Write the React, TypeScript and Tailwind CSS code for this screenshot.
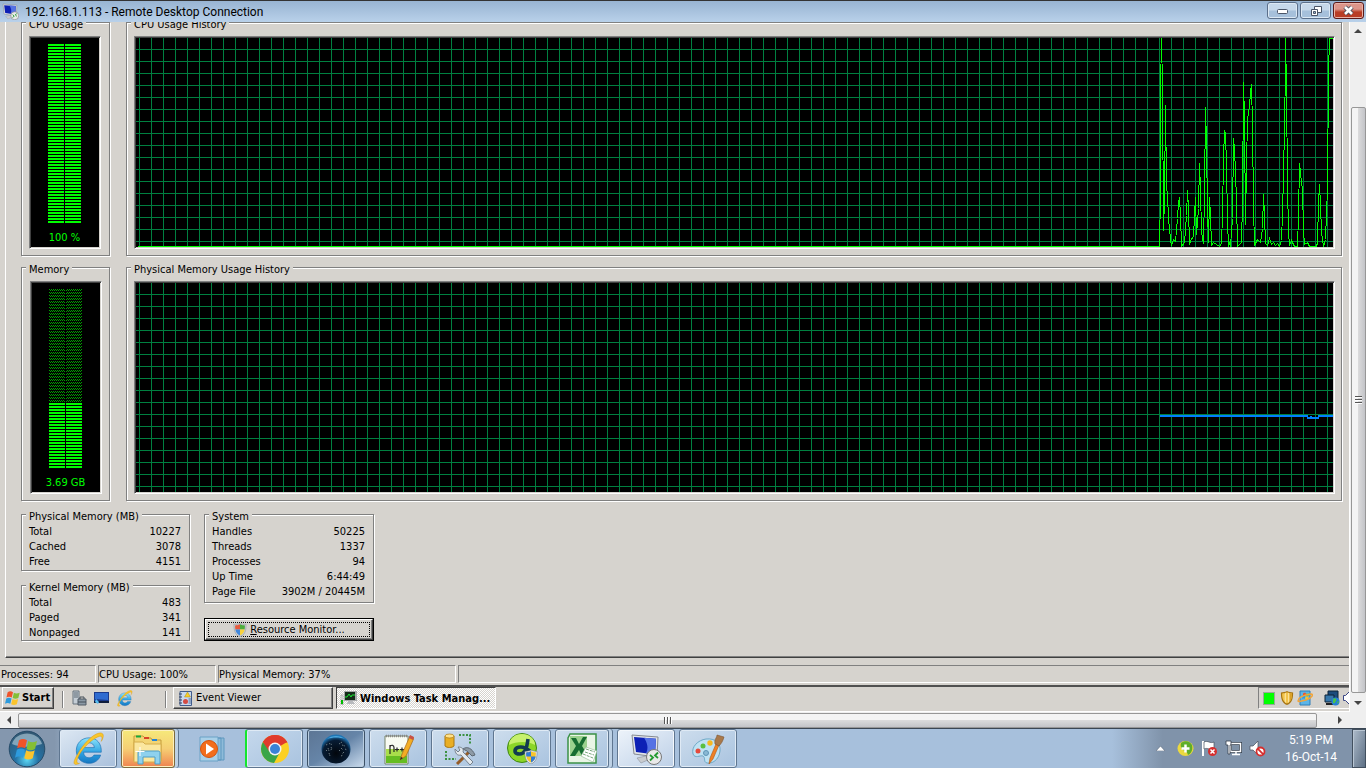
import React, { ReactNode } from 'react';

const cpuTrace =
  '1,208 2,156 2,52 3,0 4,49 5,192 6,161 7,67 8,147 9,157 10,180 12,201 13,207 15,201 17,203 19,180 20,164 21,159 22,177 23,208 26,204 28,177 29,152 30,170 31,206 33,200 35,199 36,177 37,159 38,196 40,170 41,125 42,152 43,193 45,205 46,155 47,69 48,104 49,172 50,204 51,159 52,177 53,207 55,204 58,206 61,208 63,205 64,176 65,120 66,92 67,95 68,127 69,182 70,208 71,205 72,207 74,180 75,100 76,110 77,135 78,162 79,208 83,204 84,164 85,44 86,80 87,186 88,127 89,81 91,67 92,54 93,46 94,87 95,168 96,207 99,201 102,204 104,190 105,156 106,177 107,205 109,207 111,200 113,206 115,204 117,207 119,205 121,208 123,202 124,175 125,137 126,88 127,30 127,0 128,49 129,146 130,194 131,207 133,202 136,208 139,208 140,177 141,125 143,144 144,150 145,192 146,206 149,204 151,208 158,208 159,204 160,165 161,146 162,167 163,194 165,208 167,201 168,175 169,150 170,34 171,0 176,0';

const memoryTrace = '2,133 149,133 150,135 152,135 153,134 154,135 160,135 161,133 176,133';

function Group({ title, className, children }: { title: string; className: string; children: ReactNode }) {
  return (
    <section
      className={`flex flex-col border border-[#808080] shadow-[1px_1px_0_#fff,inset_1px_1px_0_#fff] ${className}`}
    >
      <h2 className="-mt-[5px] ml-1 h-3.5 w-fit bg-[#d6d3ce] px-[3px] leading-[14px] whitespace-nowrap">{title}</h2>
      {children}
    </section>
  );
}

const sunken =
  'border border-t-[#808080] border-l-[#808080] border-r-white border-b-white shadow-[inset_1px_1px_0_#404040,inset_-1px_-1px_0_#d6d3ce] bg-black bg-clip-padding';

function Meter({ id, lit, label, className }: { id: string; lit: number; label: string; className: string }) {
  const split = (60 - lit) * 3;
  return (
    <div className={`mt-1 flex h-[213px] w-[72px] flex-col items-center pt-[7px] pr-px text-[#00ff00] ${sunken} ${className}`}>
      <svg width="33" height="180" shapeRendering="crispEdges" aria-hidden="true">
        <defs>
          <pattern id={`${id}-on`} width="17" height="3" patternUnits="userSpaceOnUse">
            <rect width="16" height="2" fill="#00ff00" />
          </pattern>
          <pattern id={`${id}-off`} width="2" height="3" patternUnits="userSpaceOnUse">
            <rect width="1" height="1" fill="#00a000" />
            <rect x="1" y="1" width="1" height="1" fill="#00a000" />
          </pattern>
        </defs>
        <rect width="16" height={split} fill={`url(#${id}-off)`} />
        <rect x="17" width="16" height={split} fill={`url(#${id}-off)`} />
        <rect y={split} width="33" height={180 - split} fill={`url(#${id}-on)`} />
      </svg>
      <span className="mt-[7px] leading-[14px]">{label}</span>
    </div>
  );
}

function History({ trace, color, width, baseline, label }: { trace: string; color: string; width: number; baseline: boolean; label: string }) {
  return (
    <div className={`mt-1 mr-1.5 ml-[7px] flex h-[213px] p-px ${sunken}`}>
      <div className="flex min-w-0 flex-1 items-end justify-end bg-[linear-gradient(to_right,#008040_1px,transparent_1px),linear-gradient(#008040_1px,transparent_1px)] bg-size-[12px_12px] bg-position-[right_-6px_top_11px]">
        <div className={`ml-0.5 h-px flex-1 ${baseline ? 'bg-[#00ff00]' : ''}`} />
        <svg width="175" height="209" viewBox="0 0 175 209" className="shrink-0" role="img" aria-label={label} shapeRendering="crispEdges">
          <polyline points={trace} fill="none" stroke={color} strokeWidth={width} transform={width === 1 ? 'translate(.5 .5)' : undefined} />
          {baseline && <rect y="208" width="2" height="1" fill={color} />}
        </svg>
      </div>
    </div>
  );
}

function Figures({ rows }: { rows: [string, string][] }) {
  return (
    <dl className="pr-2 pl-[7px] leading-[15px]">
      {rows.map(([k, v]) => (
        <div key={k} className="flex justify-between">
          <dt>{k}</dt>
          <dd>{v}</dd>
        </div>
      ))}
    </dl>
  );
}

const IE = ({ size }: { size: number }) => (
  <svg width={size} height={size} viewBox="0 0 32 32" aria-hidden="true">
    <defs>
      <linearGradient id="ie" x2="0" y2="1">
        <stop stopColor="#8be3fb" />
        <stop offset=".6" stopColor="#2ca0e0" />
        <stop offset="1" stopColor="#1677c2" />
      </linearGradient>
    </defs>
    <path d="M28.5 19H11.8c.3 3.5 2.4 5.3 5.2 5.3 2.200 0 3.800-1 4.600-2.600h6.300C26.400 26.500 22.300 29.500 17 29.500 9.800 29.500 5 24.500 5 17.500S10 5.500 17 5.500c7.300 0 12 5.500 11.500 13.500zM12 14.700h10c-.4-2.900-2.100-4.500-4.900-4.500-2.700 0-4.500 1.600-5.100 4.500z" fill="url(#ie)" stroke="#1c6db0" strokeWidth=".6" />
    <path d="M6.500 20.500C1 29 2 32.500 8 29.500 5 30 4.500 27 8 21 12 14 21 5.500 27 4c2.500-.5 2.600 2 1.500 4.800C31.500 4 31 .2 26.500 1 20 2.200 11 12 6.500 20.500z" fill="#f9c62c" stroke="#d99a12" strokeWidth=".5" />
  </svg>
);

const Flag = ({ size }: { size: number }) => (
  <svg width={size} height={size} viewBox="1 1 18 17" aria-hidden="true">
    <path d="M4 3c2-1.300 4-1.300 6 0L8.600 9c-2-1.200-4-1.200-6 0z" fill="#f0532a" />
    <path d="M11 3.500c2 1.200 4 1.200 6.500 0L16 9.500c-2.200 1.200-4.200 1.200-6.400 0z" fill="#84bf35" />
    <path d="M2.400 10c2-1.200 4-1.200 6 0L7 16c-2-1.200-4-1.200-6 0z" fill="#2e9bdd" />
    <path d="M9.400 10.500c2.200 1.200 4.200 1.200 6.400 0L14.300 16.500c-2.200 1.200-4.300 1.200-6.400 0z" fill="#fbc42d" />
  </svg>
);

const Remote = ({ size }: { size: number }) => (
  <svg width={size} height={size} viewBox="0 0 32 32" aria-hidden="true">
    <path d="M7 25l9-2 4 3-9 4z" fill="#c9ccd0" stroke="#8b9098" strokeWidth=".6" />
    <path d="M2 2l26 2-1 20L4 21z" fill="#e3e5e8" stroke="#858a92" />
    <path d="M4 4l22 1.800-1 15.700L6 19z" fill="#0d20b5" />
    <path d="M14 4.800l12 1-1 15.700-9-1.200c3-5 1-11-2-15.500z" fill="#5572e4" />
    <circle cx="24" cy="24" r="7.500" fill="#e9e9e9" stroke="#777" />
    <path d="M20 22l3 2.500-3 3M28 19.500l-3 3 3 2.500" fill="none" stroke="#259b31" strokeWidth="1.800" />
  </svg>
);

const Shield = ({ size, gold }: { size: number; gold?: boolean }) => (
  <svg width={size} height={size} viewBox="0 0 16 16" aria-hidden="true">
    <clipPath id={gold ? 'sg' : 'sc'}>
      <path d="M8 1.500c2 1 4 1.300 5.600 1.300 0 6-1 9-5.600 11.500C3.400 11.800 2.400 8.500 2.400 2.800 4.200 2.800 6 2.500 8 1.500z" />
    </clipPath>
    <path d="M8 0c2.200 1.200 4.500 1.600 7 1.600C15 8.500 14 13.500 8 16 2 13.500 1 8.500 1 1.600 3.500 1.600 5.800 1.200 8 0z" fill={gold ? '#a87510' : '#c3c8ce'} stroke={gold ? 'none' : '#8b9096'} strokeWidth=".5" />
    {gold ? (
      <g clipPath="url(#sg)">
        <path d="M0 0h16v16H0z" fill="#f2c34b" />
        <path d="M6 0v16M10 0v16" stroke="#fff2c0" />
        <path d="M11 0h5v16h-5z" fill="#d99f27" />
      </g>
    ) : (
      <g clipPath="url(#sc)">
        <path d="M0 0h8v7.500H0z" fill="#e85a3c" />
        <path d="M8 0h8v7.500H8z" fill="#4fae3c" />
        <path d="M0 7.500h8V16H0z" fill="#3f86dc" />
        <path d="M8 7.500h8V16H8z" fill="#f9d23c" />
      </g>
    )}
  </svg>
);

const UacShield = ({ size }: { size: number }) => (
  <svg width={size} height={size} viewBox="0 0 16 16" aria-hidden="true">
    <clipPath id="uac">
      <path d="M8 1.500c2 1 4 1.300 5.600 1.300 0 6-1 9-5.600 11.500C3.400 11.800 2.400 8.500 2.400 2.800 4.200 2.800 6 2.500 8 1.500z" />
    </clipPath>
    <path d="M8 0c2.200 1.200 4.500 1.600 7 1.600C15 8.500 14 13.500 8 16 2 13.500 1 8.500 1 1.600 3.500 1.600 5.800 1.200 8 0z" fill="#e4eaf0" stroke="#6b7680" strokeWidth=".6" />
    <g clipPath="url(#uac)">
      <path d="M0 0h16v16H0z" fill="#f9c52c" />
      <path d="M0 0h8v7.500H0zM8 7.500h8V16H8z" fill="#2f7bd6" />
    </g>
  </svg>
);

const Explorer = () => (
  <svg width="32" height="32" viewBox="0 0 32 32" aria-hidden="true">
    <path d="M2 3h9l2 2h6l1 2h9v21H2z" fill="#f3d574" stroke="#c39b3a" />
    <path d="M4 2.500h5v2H4z" fill="#18a83b" />
    <path d="M12 4h5v2h-5z" fill="#d84527" />
    <path d="M20 6h5v2h-5z" fill="#2685d4" />
    <path d="M2 9h9l2 2h16v18H2z" fill="#fbe79f" stroke="#d6ae4c" />
    <path d="M6 31V20c0-1.500 1-2 2-2h18c1.500 0 2 .7 2 2v11h-5v-7H11v7z" fill="#8ed1ee" stroke="#4f9dc4" />
    <path d="M8 14v9M3.500 18.500h9" stroke="#fff" strokeWidth="1" />
  </svg>
);

const Media = () => (
  <svg width="28" height="28" viewBox="0 0 28 28" aria-hidden="true">
    <path d="M20 3h6v22h-6M18 3h5v22h-5" fill="#8ebbd9" stroke="#5f98bf" />
    <path d="M2 2h18v24H2z" fill="#a9d0e8" stroke="#6aa2c6" />
    <circle cx="11" cy="14" r="8.500" fill="#f26d1c" stroke="#d4530c" />
    <path d="M8 8.500l8 5.500-8 5.500z" fill="#fff" />
  </svg>
);

const Chrome = () => (
  <svg width="30" height="30" viewBox="0 0 30 30" aria-hidden="true">
    <circle cx="15" cy="15" r="14" fill="#fbd024" />
    <path d="M15 15L2.900 8A14 14 0 0 1 27.100 8z" fill="#e03a2c" />
    <path d="M2.900 8A14 14 0 0 0 14 29l6-11-9-1z" fill="#3aa548" />
    <path d="M15 8.500h12.500A14 14 0 0 0 2.900 8L9 17z" fill="#e03a2c" />
    <circle cx="15" cy="15" r="6.500" fill="#f3f3f3" />
    <circle cx="15" cy="15" r="5" fill="#3a82d6" />
  </svg>
);

const Earth = () => (
  <svg width="30" height="30" viewBox="0 0 30 30" aria-hidden="true">
    <defs>
      <radialGradient id="earth" cx=".5" cy=".65" r=".6">
        <stop stopColor="#02060c" />
        <stop offset=".75" stopColor="#071c34" />
        <stop offset="1" stopColor="#1f75b4" />
      </radialGradient>
    </defs>
    <circle cx="15" cy="15" r="14.500" fill="url(#earth)" />
    <path d="M5 11l2-1M8 9.500l3 1M10 13l1 2-2 1M7 14l1 3M8 19l1 3M5 16l1 1M18 10l3-2M21 11l3 1M20 14l2 2M24 15l2 1M23 18l-2 2M18 16l1 1M20 22l2-1" fill="none" stroke="#6a7a80" strokeDasharray="1.500 .8" />
    <path d="M6 5c5-4 13-4 18 0-5-2-13-2-18 0z" fill="#4ca8df" />
  </svg>
);

const Notepad = () => (
  <svg width="32" height="32" viewBox="0 0 32 32" aria-hidden="true">
    <path d="M3 3h23v28H3z" fill="#f8fbf2" stroke="#758269" />
    <path d="M4 16h21v14H4z" fill="#a9de4b" />
    <path d="M4 23h21v7H4z" fill="#66bd22" />
    <path d="M4 3h22" stroke="#888" strokeWidth="2.500" strokeDasharray="1 1" />
    <path d="M8 21v-9M8 13.500c1.500-2 4-1.500 4 1V19M13 16.500h4M15 14.500v4M18 16.500h4M20 14.500v4" fill="none" stroke="#252525" strokeWidth="1.200" />
    <path d="M18 27l2-6 8-18 4 2-8 18z" fill="#f2ad24" stroke="#a86515" strokeWidth=".7" />
    <path d="M28 2l4 2-1 3-4-2z" fill="#c95146" />
    <path d="M18 27l1-3 2 1z" fill="#222" />
  </svg>
);

const Tools = () => (
  <svg width="34" height="34" viewBox="0 0 34 34" aria-hidden="true">
    <path d="M2 4v10c2 2 7 2 9 0V4z" fill="#e9ae24" stroke="#a87712" />
    <ellipse cx="6.500" cy="4" rx="4.500" ry="2" fill="#ffe28a" stroke="#a87712" strokeWidth=".7" />
    <path d="M16 3h11v10M3 19v8h10" fill="none" stroke="#3b9140" strokeWidth="2" strokeDasharray="2 1.500" />
    <path d="M14 32l12-12" stroke="#955c28" strokeWidth="3" />
    <path d="M20 17c4-3 9-1 12 6l-3 1-5-5z" fill="#8d9aa6" stroke="#5c6771" />
    <path d="M12 17l3 3 2-2-2-3c4 0 6 2 5 5l10 10-3 3-9-10c-4 1-6-2-6-6z" fill="#e4eaef" stroke="#75808b" />
  </svg>
);

const Dream = () => (
  <svg width="32" height="32" viewBox="0 0 32 32" aria-hidden="true">
    <circle cx="16" cy="15" r="14.500" fill="#8cd628" stroke="#3f8711" />
    <path d="M3 12a13 11 0 0 1 26 0c-6-4-19-4-26 0z" fill="#c7f06d" />
    <path d="M22 6c-1 6-1 11-5 14-3 2-8 1-8-2 0-4 6-5 10-3 3 1 4 3 6 4" fill="none" stroke="#123b50" strokeWidth="3.600" />
    <g transform="translate(18 17)"><UacShield size={14} /></g>
  </svg>
);

const Excel = () => (
  <svg width="32" height="32" viewBox="0 0 32 32" aria-hidden="true">
    <path d="M4 1h26v29H2V5z" fill="#e9f5e6" stroke="#3b9147" strokeWidth="1.500" />
    <path d="M4 3h17v20H4z" fill="#9bd28e" />
    <path d="M5 5h5l3 6 4-7h4l-5 9 6 10h-6l-3-6-4 6H4l6-10z" fill="#176d31" />
    <path d="M20 14l11 4-4 11-12-6z" fill="#fff" stroke="#8eb890" strokeWidth=".6" />
    <path d="M20 16l9 3M19 19l9 3M17 21l10 4" stroke="#79a77c" strokeDasharray="3 1" />
  </svg>
);

const Paint = () => (
  <svg width="34" height="32" viewBox="0 0 34 32" aria-hidden="true">
    <path d="M15 6c9-1 15 4 14 12-1 9-8 13-13 12-4-1-1-5-4-7-3-1-8 3-10-2C0 14 7 7 15 6z" fill="#bfe2f3" stroke="#6fa9c7" />
    <circle cx="7" cy="18" r="2.500" fill="#e54a3c" />
    <circle cx="12" cy="13" r="2.500" fill="#5abf3f" />
    <circle cx="19" cy="10" r="2.700" fill="#f6b823" />
    <circle cx="15" cy="20" r="2.500" fill="#8ab9d5" stroke="#5e94b5" />
    <path d="M18 31l1-6 6-14 3 1-6 14z" fill="#ee8126" stroke="#b45913" strokeWidth=".6" />
    <path d="M24 11c-1-5 2-6 2-9l7 2c-1 4-3 7-5 9z" fill="#a9794a" stroke="#7e5630" strokeWidth=".6" />
  </svg>
);

const Tasks = () => (
  <svg width="17" height="14" viewBox="0 0 17 14" aria-hidden="true">
    <path d="M1 4h2v10H1z" fill="#e5e5e5" stroke="#888" strokeWidth=".5" />
    <path d="M1 9h2v4H1z" fill="#0b0" />
    <path d="M4 0h13v10H4z" fill="#a7a9ab" />
    <path d="M5 1h10v8H5z" fill="#142b18" />
    <path d="M5 6h2l2-3 2 3 1-2h3" fill="none" stroke="#1be334" />
    <path d="M8 10h5l2 3H7z" fill="#b8babd" />
  </svg>
);

const Orb = () => (
  <svg width="38" height="38" viewBox="0 0 38 38" aria-hidden="true">
    <defs>
      <radialGradient id="orb" cy=".8" r=".8">
        <stop stopColor="#5cd8f5" />
        <stop offset=".4" stopColor="#2471a4" />
        <stop offset="1" stopColor="#32566f" />
      </radialGradient>
    </defs>
    <circle cx="19" cy="19" r="17.800" fill="url(#orb)" stroke="#254b69" />
    <path d="M4 14C8 0 30 0 34 14c-9 3-21 4-30 0z" fill="#c9dce6" opacity=".55" />
    <g transform="translate(7 7)"><Flag size={24} /></g>
  </svg>
);

const ServerIcon = () => (
  <svg width="15" height="16" viewBox="0 0 15 16" aria-hidden="true">
    <path d="M1 1h6v13H1z" fill="#c4cdd5" stroke="#66727c" />
    <path d="M2 3h4M2 5h4M2 7h4" stroke="#5a6771" />
    <path d="M6 9h8v6H6z" fill="#8b99a5" stroke="#505b64" />
    <path d="M8 9V7h4v2M6 12h8" fill="none" stroke="#444f58" />
  </svg>
);

const DesktopIcon = () => (
  <svg width="15" height="14" viewBox="0 0 15 14" aria-hidden="true">
    <path d="M0 1h15v11H0z" fill="#1b3a8c" />
    <path d="M1 2h13v7L1 8z" fill="#2f6bd0" />
    <path d="M0 10h15v2H0z" fill="#101d3c" />
    <path d="M2 8l3 3-1 2-3-2z" fill="#58bdf2" />
  </svg>
);

const EventIcon = () => (
  <svg width="13" height="15" viewBox="0 0 13 15" aria-hidden="true">
    <path d="M1 .5h11.500v14H1z" fill="#c7d8ee" stroke="#405b8b" />
    <path d="M0 3h3M0 6h3M0 9h3M0 12h3" stroke="#33415e" />
    <path d="M8.500 1l3 5h-6z" fill="#f8cf27" stroke="#a98714" strokeWidth=".5" />
    <circle cx="6.500" cy="10.500" r="2.500" fill="#d34b44" />
    <path d="M9.500 8h2.500M9.500 10h2.500M9.500 12h2.500" stroke="#536f9e" />
  </svg>
);

const UpdateIcon = () => (
  <svg width="16" height="16" viewBox="0 0 16 16" aria-hidden="true">
    <path d="M3 1h10v14H3z" fill="#5cb5e8" stroke="#2f7eb8" />
    <g transform="translate(5 2)"><Flag size={8} /></g>
    <path d="M1 11C1 7 7 5 14 4c3 0 1 4-5 6-4 1-8 2-8 1z" fill="none" stroke="#f1a53b" strokeWidth="1.500" />
  </svg>
);

const NetGlobe = () => (
  <svg width="16" height="16" viewBox="0 0 16 16" aria-hidden="true">
    <path d="M4 1h10v8H4z" fill="#1c4c7c" stroke="#0c2237" />
    <path d="M1 5h9v7H1z" fill="#3677ab" stroke="#0c2237" />
    <path d="M2 14h7" stroke="#222" strokeWidth="2" />
    <circle cx="11.500" cy="11.500" r="4" fill="#2680d5" />
    <path d="M9 9c3-2 4 1 3 2s-1 3-3 2zM13 12l2-1-1 3z" fill="#4ac449" />
  </svg>
);

const raised =
  'border border-t-white border-l-white border-r-[#404040] border-b-[#404040] shadow-[inset_-1px_-1px_0_#808080]';

const apps: [string, ReactNode, string][] = [
  ['Internet Explorer', <IE size={34} />, 'w-[58px] border-[#5f7690] bg-linear-to-br from-[#dde8f3] to-[#a9c0dc] shadow-[inset_0_0_0_1px_#dfeaf5]'],
  ['Windows Explorer', <Explorer />, 'mr-1 w-[54px] border-[#7d6b3d] bg-linear-to-b from-[#f6e97a] via-[#f5cf74] to-[#ee8350] shadow-[inset_0_0_0_1px_#fdf0be,3px_0_0_#bdd1e5,4px_0_0_#5f7690]'],
  ['Windows Media Player', <Media />, 'w-[58px] border-transparent'],
  ['Google Chrome', <Chrome />, 'w-[58px] border-[#5f7690] border-l-[#14e62e] border-l-2 bg-linear-to-br from-[#c5d8ec] to-[#a9c3df] shadow-[inset_0_0_0_1px_#dfeaf5]'],
  ['Earth', <Earth />, 'w-[58px] border-[#3d5268] bg-linear-to-br from-[#5c7594] via-[#6685a8] to-[#cbdcee] shadow-[inset_0_0_0_1px_#b9cde0]'],
  ['Notepad++', <Notepad />, 'w-[58px] border-[#5f7690] bg-linear-to-br from-[#cddded] to-[#a9c3df] shadow-[inset_0_0_0_1px_#dfeaf5]'],
  ['Database Tools', <Tools />, 'w-[58px] border-[#5f7690] bg-linear-to-br from-[#cddded] to-[#a9c3df] shadow-[inset_0_0_0_1px_#dfeaf5]'],
  ['Dreamweaver', <Dream />, 'w-[58px] border-[#5f7690] bg-linear-to-br from-[#cddded] to-[#a9c3df] shadow-[inset_0_0_0_1px_#dfeaf5]'],
  ['Excel', <Excel />, 'mr-1 w-[54px] border-[#5f7690] bg-linear-to-br from-[#cddded] to-[#a9c3df] shadow-[inset_0_0_0_1px_#dfeaf5,3px_0_0_#bdd1e5,4px_0_0_#5f7690]'],
  ['Remote Desktop Connection', <Remote size={32} />, 'w-[58px] border-[#5f7690] bg-linear-to-br from-[#edf3fa] to-[#bdd0e7] shadow-[inset_0_0_0_1px_#f4f8fc]'],
  ['Paint', <Paint />, 'w-[58px] border-[#5f7690] bg-linear-to-br from-[#cddded] to-[#a9c3df] shadow-[inset_0_0_0_1px_#dfeaf5]'],
];

const winButton =
  'flex h-[17px] w-[31px] items-center justify-center rounded-[3px] border border-[#5b6f8a] bg-linear-to-b from-[#c6d8ea] from-45% to-[#a6c0db] to-55% shadow-[inset_0_0_0_1px_#dce8f4]';

export default function App() {
  return (
    <div className="flex h-screen flex-col overflow-hidden bg-[#d6d3ce] font-['Tahoma','DejaVu_Sans_Condensed','DejaVu_Sans',sans-serif] text-[11px] text-black">
      <header className="flex h-[22px] shrink-0 items-center border-t border-[#333] bg-linear-to-b from-[#98b4d2] to-[#b9d1ea] pr-0.5 pl-0.5 font-['Segoe_UI',Roboto,'Noto_Sans',sans-serif] text-xs">
        <Remote size={17} />
        <h1 className="ml-1.5 flex-1 leading-5">192.168.1.113 - Remote Desktop Connection</h1>
        <div className="flex gap-0.5 self-start pt-px">
          <button aria-label="Minimize" className={winButton}>
            <svg width="12" height="6"><rect x=".5" y="1.500" width="10" height="4" rx="1" fill="#fff" stroke="#4a5568" /></svg>
          </button>
          <button aria-label="Restore" className={winButton}>
            <svg width="12" height="12"><path d="M4.500 1.500h7v6h-7z" fill="#fff" stroke="#4a5568" /><path d="M1.500 4.500h6v6h-6z" fill="#fff" stroke="#4a5568" /><path d="M3.500 6.500h2v2h-2z" fill="#9bb7d4" stroke="#4a5568" /></svg>
          </button>
          <button aria-label="Close" className="flex h-[17px] w-[31px] items-center justify-center rounded-[3px] border border-[#5c1a1a] bg-linear-to-b from-[#dc958a] from-40% to-[#b93d26] to-60% shadow-[inset_0_0_0_1px_#e9b3a8]">
            <svg width="13" height="11"><path d="M3 2l7 7M10 2L3 9" stroke="#4a4f5c" strokeWidth="4.500" /><path d="M3 2l7 7M10 2L3 9" stroke="#fff" strokeWidth="2.600" /></svg>
          </button>
        </div>
      </header>

      <div className="flex min-h-0 flex-1">
        <main className="flex min-w-0 flex-1 flex-col overflow-hidden">
          <div className="ml-[5px] flex flex-1 flex-col border-b border-l border-b-[#404040] border-l-white pr-[7px] pb-[15px] pl-[15px] shadow-[inset_0_-1px_0_#808080]">
            <div className="flex gap-4">
              <Group title="CPU Usage" className="h-[234px] w-[89px]">
                <Meter id="cpu" lit={60} label="100 %" className="ml-[7px]" />
              </Group>
              <Group title="CPU Usage History" className="h-[234px] flex-1">
                <History trace={cpuTrace} color="#00ff00" width={1} baseline label="CPU usage history" />
              </Group>
            </div>
            <div className="mt-[11px] flex gap-4">
              <Group title="Memory" className="h-[234px] w-[89px]">
                <Meter id="mem" lit={22} label="3.69 GB" className="ml-2" />
              </Group>
              <Group title="Physical Memory Usage History" className="h-[234px] flex-1">
                <History trace={memoryTrace} color="#0080ff" width={2} baseline={false} label="Physical memory usage history" />
              </Group>
            </div>
            <div className="mt-[13px] flex gap-3.5">
              <div className="flex w-[169px] flex-col gap-3.5">
                <Group title="Physical Memory (MB)" className="h-[57px]">
                  <Figures rows={[['Total', '10227'], ['Cached', '3078'], ['Free', '4151']]} />
                </Group>
                <Group title="Kernel Memory (MB)" className="h-14">
                  <Figures rows={[['Total', '483'], ['Paged', '341'], ['Nonpaged', '141']]} />
                </Group>
              </div>
              <div className="flex w-[170px] flex-col justify-between">
                <Group title="System" className="h-[89px]">
                  <Figures rows={[['Handles', '50225'], ['Threads', '1337'], ['Processes', '94'], ['Up Time', '6:44:49'], ['Page File', '3902M / 20445M']]} />
                </Group>
                <button className="border border-black">
                  <span className={`flex h-[21px] p-0.5 ${raised}`}>
                    <span className="flex flex-1 items-center justify-center gap-[3px] border border-dotted border-black">
                      <Shield size={14} />
                      <span className="pt-px"><u>R</u>esource Monitor...</span>
                    </span>
                  </span>
                </button>
              </div>
            </div>
          </div>

          <footer className="mt-[7px] flex h-[18px] shrink-0 gap-0.5 leading-[17px] whitespace-nowrap *:border *:border-t-[#808080] *:border-r-white *:border-b-white *:border-l-[#808080]">
            <p className="w-24 border-l-0! pl-px">Processes: 94</p>
            <p className="w-[118px]">CPU Usage: 100%</p>
            <p className="w-[238px]">Physical Memory: 37%</p>
            <p className="flex-1 border-r-0!" />
          </footer>

          <nav aria-label="Remote taskbar" className="mt-0.5 flex h-[27px] shrink-0 items-start border-t-2 border-b border-t-[#505050] border-b-white pl-0.5">
            <button className={`flex h-[22px] w-[52px] items-center gap-px pl-0.5 font-bold ${raised}`}>
              <Flag size={16} />
              <span className="pt-px">Start</span>
            </button>
            <span className="mt-1 ml-2 h-[17px] w-0.5 border-l border-[#808080] bg-white" />
            <button aria-label="Server Manager" className="mt-[3px] ml-2"><ServerIcon /></button>
            <button aria-label="Show desktop" className="mt-1 ml-[7px]"><DesktopIcon /></button>
            <button aria-label="Internet Explorer" className="mt-[3px] ml-[7px]"><IE size={17} /></button>
            <span className="mt-1 mr-1.5 ml-8 h-[17px] w-0.5 border-l border-[#808080] bg-white" />
            <button className={`flex h-[22px] w-40 items-center gap-1 pl-[5px] ${raised}`}>
              <EventIcon />
              <span className="pt-px">Event Viewer</span>
            </button>
            <button className="ml-[3px] flex h-[22px] w-40 items-center gap-[3px] border border-t-[#404040] border-r-white border-b-white border-l-[#404040] bg-[conic-gradient(#fff_25%,#d6d3ce_0_50%,#fff_0_75%,#d6d3ce_0)] bg-size-[2px_2px] pl-[3px] font-bold whitespace-nowrap">
              <Tasks />
              <span className="pt-0.5">Windows Task Manag...</span>
            </button>
            <div className="ml-auto flex h-[22px] w-[91px] items-center overflow-hidden border-t border-b border-l border-t-[#808080] border-b-white border-l-[#808080] pl-1">
              <span className="h-[13px] w-3 shrink-0 border border-[#9aa89a] bg-[#00ff00]" />
              <span className="ml-[5px] shrink-0"><Shield size={14} gold /></span>
              <span className="ml-[3px] shrink-0"><UpdateIcon /></span>
              <span className="ml-[11px] shrink-0"><NetGlobe /></span>
              <svg width="12" height="14" className="ml-0.5 shrink-0" aria-hidden="true"><path d="M1.500 4.500h2l4-4v13l-4-4h-2z" fill="#fff" stroke="#3b4684" /></svg>
            </div>
          </nav>
        </main>

        <div className="flex w-[17px] flex-col items-center border-l border-white bg-[#efefef]">
          <button aria-label="Scroll up" className="flex h-[85px] w-full items-start justify-center pt-[7px]">
            <svg width="8" height="4"><path d="M0 4l4-4 4 4z" fill="#444" /></svg>
          </button>
          <div className="flex w-[15px] flex-1 flex-col items-center justify-center gap-px rounded-[2px] border border-[#979797] bg-linear-to-r from-[#f4f4f4] from-45% via-[#dadadb] via-50% to-[#c3c4c8]">
            <span className="h-0.5 w-[7px] border-b border-white bg-[#555]" />
            <span className="h-0.5 w-[7px] border-b border-white bg-[#555]" />
            <span className="h-0.5 w-[7px] border-b border-white bg-[#555]" />
          </div>
          <button aria-label="Scroll down" className="flex h-[19px] w-full items-center justify-center">
            <svg width="8" height="4"><path d="M0 0l4 4 4-4z" fill="#444" /></svg>
          </button>
        </div>
      </div>

      <div className="flex h-4 shrink-0 items-center bg-[#efefef] pr-[17px]">
        <button aria-label="Scroll left" className="flex w-[18px] justify-center">
          <svg width="4" height="8"><path d="M4 0L0 4l4 4z" fill="#444" /></svg>
        </button>
        <div className="flex h-[15px] flex-1 items-center justify-center gap-px rounded-[2px] border border-[#979797] bg-linear-to-b from-[#f4f4f4] from-45% via-[#dadadb] via-50% to-[#c3c4c8]">
          <span className="h-[7px] w-0.5 border-r border-white bg-[#555]" />
          <span className="h-[7px] w-0.5 border-r border-white bg-[#555]" />
          <span className="h-[7px] w-0.5 border-r border-white bg-[#555]" />
        </div>
        <button aria-label="Scroll right" className="flex w-8 justify-end pr-[7px]">
          <svg width="4" height="8"><path d="M0 0l4 4-4 4z" fill="#444" /></svg>
        </button>
      </div>

      <nav aria-label="Taskbar" className="flex h-10 shrink-0 border-t border-[#3a4654] bg-linear-to-r from-[#8497ae] from-4% via-[#a7c0dc] via-6% to-[#a7c0dc] font-['Segoe_UI',Roboto,'Noto_Sans',sans-serif] text-xs">
        <button aria-label="Start" className="flex w-[59px] items-center pl-2"><Orb /></button>
        <ul className="flex gap-1">
          {apps.map(([name, icon, tone]) => (
            <li key={name} className="flex">
              <button aria-label={name} className={`flex h-[39px] items-center justify-center rounded-[3px] border ${tone}`}>
                {icon}
              </button>
            </li>
          ))}
        </ul>
        <div className="ml-auto flex w-[254px] items-center justify-end bg-linear-to-r from-transparent to-[#8093aa] to-20% text-white">
          <button aria-label="Show hidden icons" className="mr-3"><svg width="9" height="5"><path d="M0 5l4.500-5L9 5z" fill="#fff" stroke="#4c5b6d" strokeWidth=".5" /></svg></button>
          <svg width="17" height="17" className="mr-[7px]" aria-hidden="true">
            <ellipse cx="8.500" cy="8.500" rx="8" ry="7.500" fill="#ecd93f" />
            <path d="M4 3c4-3 9-2 11 2 1 4 0 8-4 10-1-3-2-4-5-5-2-2-3-4-2-7z" fill="#5fae2a" />
            <path d="M8.500 4.500v8M4.500 8.500h8" stroke="#fff" strokeWidth="2.500" />
          </svg>
          <svg width="17" height="17" className="mr-[7px]" aria-hidden="true">
            <path d="M2 1v15" stroke="#fff" strokeWidth="2" />
            <path d="M3 2c4-2 6 2 10 0v7c-4 2-6-2-10 0z" fill="#fff" stroke="#454f5b" strokeWidth=".7" />
            <circle cx="11.500" cy="11.500" r="4.500" fill="#d62e2e" />
            <path d="M9.500 9.500l4 4M13.500 9.500l-4 4" stroke="#fff" strokeWidth="1.500" />
          </svg>
          <svg width="17" height="17" className="mr-[7px]" aria-hidden="true">
            <path d="M5.500 3.500h10v8h-10z" fill="#7f91a6" stroke="#333e4b" strokeWidth="3" />
            <path d="M5.500 3.500h10v8h-10zM7 14.500h8M11 12v2" fill="none" stroke="#fff" strokeWidth="1.500" />
            <path d="M1 1h5v4H5v9H3V5H1z" fill="#fff" stroke="#333e4b" strokeWidth=".8" />
          </svg>
          <svg width="17" height="17" aria-hidden="true">
            <path d="M1 6h3l5-5v14l-5-5H1z" fill="#fff" stroke="#454f5b" strokeWidth=".7" />
            <circle cx="11.500" cy="11.500" r="4" fill="#fff" stroke="#d62e2e" strokeWidth="1.800" />
            <path d="M8.700 8.700l5.600 5.600" stroke="#d62e2e" strokeWidth="1.800" />
          </svg>
          <time className="mr-3.5 ml-[18px] w-[54px] text-center leading-[17px] whitespace-nowrap">
            5:19 PM
            <br />
            16-Oct-14
          </time>
          <button aria-label="Show desktop" className="h-full w-3.5 border border-[#42505f] bg-linear-to-br from-[#aebccb] to-[#5e7085] shadow-[inset_1px_1px_0_#b9c6d3]" />
        </div>
      </nav>
    </div>
  );
}
